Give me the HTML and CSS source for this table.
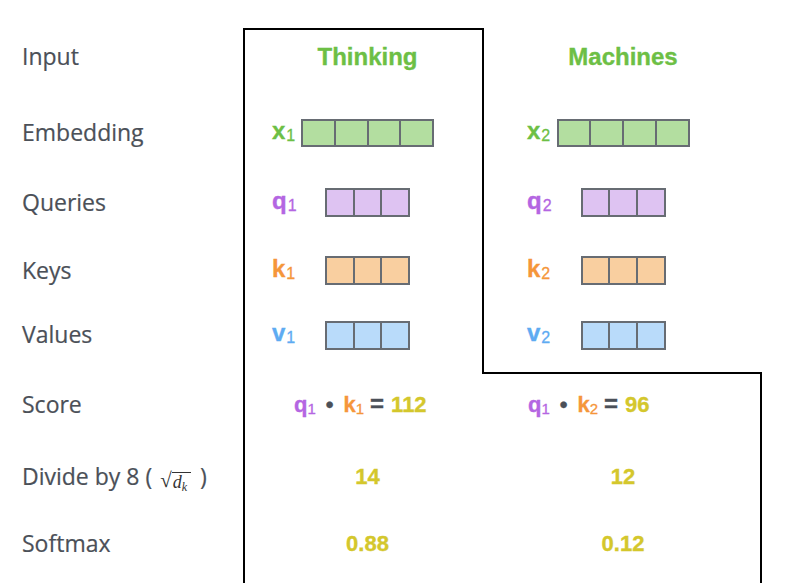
FILE: index.html
```html
<!DOCTYPE html>
<html lang="en">
<head>
<meta charset="utf-8">
<title>Self-attention: Thinking Machines</title>
<link rel="stylesheet" href="styles.css">
</head>
<body>
<div class="board">
  <div class="frame frame-top"></div>
  <div class="frame frame-left"></div>
  <div class="frame frame-right"></div>

  <div class="label r-input">Input</div>
  <div class="cell c1 r-input head"><span class="word">Thinking</span></div>
  <div class="cell c2 r-input head"><span class="word">Machines</span></div>

  <div class="label r-emb">Embedding</div>
  <div class="cell c1 r-emb vecrow"><span class="vec green">x<sub>1</sub></span><div class="bar four fill-green"><i></i><i></i><i></i><i></i></div></div>
  <div class="cell c2 r-emb vecrow"><span class="vec green">x<sub>2</sub></span><div class="bar four fill-green"><i></i><i></i><i></i><i></i></div></div>

  <div class="label r-q">Queries</div>
  <div class="cell c1 r-q vecrow"><span class="vec purple">q<sub>1</sub></span><div class="bar three fill-purple"><i></i><i></i><i></i></div></div>
  <div class="cell c2 r-q vecrow"><span class="vec purple">q<sub>2</sub></span><div class="bar three fill-purple"><i></i><i></i><i></i></div></div>

  <div class="label r-k">Keys</div>
  <div class="cell c1 r-k vecrow"><span class="vec orange">k<sub>1</sub></span><div class="bar three fill-orange"><i></i><i></i><i></i></div></div>
  <div class="cell c2 r-k vecrow"><span class="vec orange">k<sub>2</sub></span><div class="bar three fill-orange"><i></i><i></i><i></i></div></div>

  <div class="label r-v">Values</div>
  <div class="cell c1 r-v vecrow"><span class="vec blue">v<sub>1</sub></span><div class="bar three fill-blue"><i></i><i></i><i></i></div></div>
  <div class="cell c2 r-v vecrow"><span class="vec blue">v<sub>2</sub></span><div class="bar three fill-blue"><i></i><i></i><i></i></div></div>

  <div class="label r-score">Score</div>
  <div class="cell c1 r-score formula">
    <span class="purple">q<sub>1</sub></span><span class="dot">•</span><span class="orange">k<sub>1</sub></span><span class="eq">=</span><span class="yellow">112</span>
  </div>
  <div class="cell c2 r-score formula">
    <span class="purple">q<sub>1</sub></span><span class="dot">•</span><span class="orange">k<sub>2</sub></span><span class="eq">=</span><span class="yellow">96</span>
  </div>

  <div class="label r-div">Divide by 8 ( <span class="sqrt"><span class="rad">√</span><span class="radicand"><i>d</i><sub>k</sub></span></span><span class="close">)</span></div>
  <div class="cell c1 r-div num">14</div>
  <div class="cell c2 r-div num">12</div>

  <div class="label r-soft">Softmax</div>
  <div class="cell c1 r-soft num">0.88</div>
  <div class="cell c2 r-soft num">0.12</div>
</div>
</body>
</html>
```

FILE: styles.css
```css
* { box-sizing: border-box; }

html, body {
  margin: 0;
  padding: 0;
  background: #ffffff;
  overflow: hidden;
}

body {
  width: 812px;
  height: 583px;
  font-family: "Liberation Sans", Arial, sans-serif;
}

.board {
  display: grid;
  grid-template-columns: 243px 241px 278px 1fr;
  grid-template-rows: 28px 58px 94px 45px 91px 38px 18px 65px 80px 54px 12px;
  height: 583px;
}

/* outline */
.frame { border: 0 solid #000; }
.frame-top {
  grid-column: 2;
  grid-row: 2 / 8;
  border-top-width: 2px;
  border-left-width: 2px;
  border-right-width: 2px;
}
.frame-left {
  grid-column: 2;
  grid-row: 8 / 12;
  border-left-width: 2px;
}
.frame-right {
  grid-column: 3;
  grid-row: 8 / 12;
  margin-left: -2px;
  border-top-width: 2px;
  border-right-width: 2px;
}

/* row placement */
.r-input { grid-row: 2; }
.r-emb { grid-row: 3; }
.r-q { grid-row: 4; }
.r-k { grid-row: 5; }
.r-v { grid-row: 6; }
.r-score { grid-row: 8; }
.r-div { grid-row: 9; }
.r-soft { grid-row: 10; }

.label {
  grid-column: 1;
  align-self: center;
  padding-left: 22px;
  font-family: "Open Sans", "Noto Sans", sans-serif;
  font-size: 23px;
  font-weight: 500;
  line-height: 1.2;
  color: #4b5058;
  -webkit-text-stroke: 0.2px #4b5058;
  white-space: nowrap;
}

.cell {
  align-self: center;
  font-weight: bold;
  -webkit-text-stroke: 0.35px currentColor;
}
.c1 { grid-column: 2; padding-left: 8px; }
.c2 { grid-column: 3; }

.head, .num {
  text-align: center;
}

.word {
  font-size: 24px;
  line-height: 24px;
  color: #6dbf45;
}

.num {
  font-size: 22px;
  line-height: 22px;
  color: #d4c72c;
}

/* vector rows */
.vecrow {
  display: grid;
  grid-template-columns: 1fr auto 1fr;
  align-items: center;
}
.vec {
  justify-self: start;
  font-size: 24px;
  line-height: 24px;
  margin-bottom: 4px;
}
.c1 .vec { margin-left: 21px; }
.c2 .vec { margin-left: 43px; }

.vec sub {
  font-size: 16px;
  font-weight: normal;
  -webkit-text-stroke: 0.3px currentColor;
  line-height: 0;
  vertical-align: -2px;
  margin-left: 1px;
}

.bar {
  display: flex;
  border: 2px solid #676c73;
}
.bar.four { width: 133px; height: 28px; }
.bar.three { width: 85px; height: 29px; }
.bar i {
  display: block;
  flex: 1;
}
.bar i + i { border-left: 2px solid #676c73; }

.fill-green { background: #b3dea0; }
.fill-purple { background: #dec3f2; }
.fill-orange { background: #f9cfa0; }
.fill-blue { background: #b9dbfa; }

.green { color: #6dbf45; }
.purple { color: #b466e2; }
.orange { color: #f5963a; }
.blue { color: #5eabf2; }
.yellow { color: #d4c72c; }

/* score formula */
.formula {
  display: flex;
  align-items: baseline;
  font-size: 22px;
  line-height: 22px;
}
.c1.formula { padding-left: 51px; }
.c2.formula { padding-left: 44px; }
.formula sub {
  font-size: 15px;
  font-weight: normal;
  -webkit-text-stroke: 0.3px currentColor;
  line-height: 0;
  vertical-align: -2px;
}
.formula .dot {
  color: #4b5058;
  margin-left: 10px;
  margin-right: 10px;
}
.formula .eq {
  color: #4b5058;
  font-size: 24px;
  margin-left: 6px;
  margin-right: 7px;
}

/* sqrt(d_k) */
.sqrt {
  display: inline-flex;
  align-items: flex-start;
  font-family: "Liberation Serif", "DejaVu Serif", serif;
  color: #333;
  -webkit-text-stroke: 0;
  vertical-align: -2px;
  margin-left: 2px;
}
.rad {
  font-size: 21px;
  line-height: 20px;
}
.radicand {
  border-top: 1px solid #333;
  margin-top: 2px;
  padding: 0 4px 0 1px;
  font-size: 18px;
  line-height: 18px;
}
.radicand i { font-style: italic; }
.radicand sub {
  font-size: 12px;
  font-style: italic;
  line-height: 0;
  vertical-align: -3px;
}
.close { margin-left: 9px; }
```
